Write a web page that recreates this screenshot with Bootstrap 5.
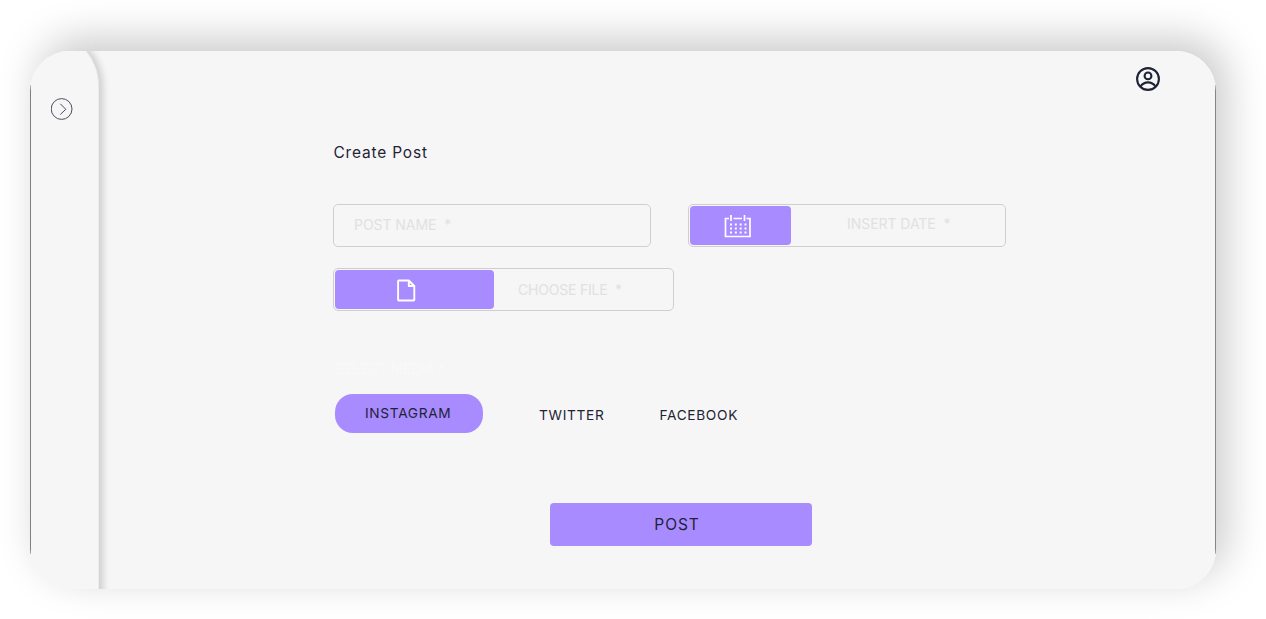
<!DOCTYPE html>
<html lang="en">
<head>
<meta charset="utf-8">
<meta name="viewport" content="width=device-width, initial-scale=1">
<title>Create Post</title>
<link href="https://cdn.jsdelivr.net/npm/bootstrap@5.3.0/dist/css/bootstrap.min.css" rel="stylesheet">
<style>
body{font-family:Inter,"Liberation Sans",sans-serif;color:#1f2336;background:#fff;height:619px;padding:50.5px 50px 0 30px;overflow:hidden}
.app-frame{width:1186px;height:538px;border-radius:40px;box-shadow:10px -12px 42px rgba(0,0,0,.21)}
.app-inner{border-radius:40px;background:#f6f6f6}
.edge{width:1px;height:469px;margin-top:34px;background:#82828a}
.edge-end{background:#858585}
.side{width:68px;height:580px;margin-top:-20px;padding:66.5px 0 0 20px;background:#f6f6f6;border-radius:0 55px 0 0;border-right:1px solid #ececec;box-shadow:4px 0 7px rgba(0,0,0,.16)}
.side svg,.user-btn svg{display:block}
.user-btn{margin:15.5px 54px 0 0}
.post-form{margin-left:234px;width:672.5px}
.post-form h1{font-size:15.5px;font-weight:400;line-height:20px;letter-spacing:.8px;margin:51px 0 41px .5px}
.field{height:42.5px;border:1px solid #cfcfcf;border-radius:5px;padding:1px;font-size:14px;letter-spacing:-.05px;line-height:20px;color:#e1e1e1;white-space:pre}
.field-name{width:317.5px;padding-left:20px}
.field-date{width:317.5px}
.field-file{width:341px;margin-top:21.5px}
.lbl-name{margin-top:-1px}
.lbl-date{margin:-3px 0 0 56px}
.lbl-file{margin:2px 0 0 24px;letter-spacing:-.2px}
.tile{height:38.5px;background:#a88bff;border-radius:4px}
.tile-date{width:101px}
.tile-date svg{margin:1px 0 0 -5px}
.tile-file{width:159px}
.doc{margin:3px 0 0 -17px}
.hint{font-size:14px;line-height:18px;color:#f9f9f9;letter-spacing:-.2px;margin:49.5px 0 0 2px;white-space:pre}
.tabs-row{margin:16px 0 0 2px;font-size:13.7px;letter-spacing:.68px}
.pick{background:none;border:0;padding:0;color:inherit;letter-spacing:inherit;line-height:18px;text-align:left}
.pick-on{width:148px;height:38.5px;border-radius:18px;background:#a88bff;padding:0 0 0 30px}
.pick-tw{margin:3.5px 0 0 56px}
.pick-fb{margin:3.5px 0 0 55px}
.post-btn{width:262px;height:43px;border:0;border-radius:4px;background:#a88bff;color:#1f2336;font-size:15.5px;letter-spacing:.9px;margin:70.5px 0 0 217px;padding:1px 8px 0 0}
</style>
</head>
<body>
<div class="app-frame">
  <div class="app-inner d-flex overflow-hidden w-100 h-100">
    <div class="edge flex-shrink-0"></div>
    <aside class="side flex-shrink-0">
      <svg width="23" height="24" viewBox="0 0 23 24" fill="none" stroke="#4b4e5c" stroke-width="1"><circle cx="10.6" cy="12" r="10.4"/><path d="M9.300 6.800 14.800 12.300 9.300 17.500"/></svg>
    </aside>
    <main class="flex-grow-1 d-flex flex-column">
      <header class="d-flex justify-content-end">
        <div class="user-btn"><svg width="26" height="26" viewBox="0 0 26 26" fill="none" stroke="#1f2336" stroke-width="2.100"><circle cx="13" cy="13" r="10.900"/><circle cx="13" cy="9.900" r="3.400"/><path d="M5.500 20.500c1.800-2.700 4.500-4.100 7.500-4.100s5.700 1.400 7.500 4.100"/></svg></div>
      </header>
      <section class="post-form">
        <h1>Create Post</h1>
        <div class="d-flex justify-content-between">
          <div class="field field-name d-flex align-items-center"><span class="lbl-name">POST NAME  *</span></div>
          <div class="field field-date d-flex align-items-center">
            <div class="tile tile-date d-flex align-items-center justify-content-center flex-shrink-0">
              <svg width="28" height="24" viewBox="0 0 28 24" fill="none" stroke="#fff" stroke-width="1.700"><path d="M5 4.500H1.500V22.500H26V4.500H22.500M9.500 4.500H18M7 1V7M20.500 1V7"/><path d="M6 10.500H23M6 14.500H23M6 18.500H23" stroke-width="2" stroke-dasharray="2 2.830"/></svg>
            </div>
            <span class="lbl-date">INSERT DATE  *</span>
          </div>
        </div>
        <div class="field field-file d-flex align-items-center">
          <div class="tile tile-file d-flex align-items-center justify-content-center flex-shrink-0">
            <svg class="doc" width="20" height="23" viewBox="0 0 20 23" fill="none" stroke="#fff" stroke-width="1.900" stroke-linejoin="round"><path d="M2.800 1.500H12.800L18.300 7V20.800q0 .7-.7.7H2.800q-.7 0-.7-.7V2.200q0-.7.7-.7ZM12.800 1.500V7H18.300"/></svg>
          </div>
          <span class="lbl-file">CHOOSE FILE  *</span>
        </div>
        <div class="hint">SELECT MEDIA *</div>
        <div class="tabs-row d-flex align-items-center">
          <button class="pick pick-on">INSTAGRAM</button>
          <button class="pick pick-tw">TWITTER</button>
          <button class="pick pick-fb">FACEBOOK</button>
        </div>
        <button class="post-btn">POST</button>
      </section>
    </main>
    <div class="edge edge-end flex-shrink-0"></div>
  </div>
</div>
<script src="https://cdn.jsdelivr.net/npm/bootstrap@5.3.0/dist/js/bootstrap.bundle.min.js"></script>
</body>
</html>
